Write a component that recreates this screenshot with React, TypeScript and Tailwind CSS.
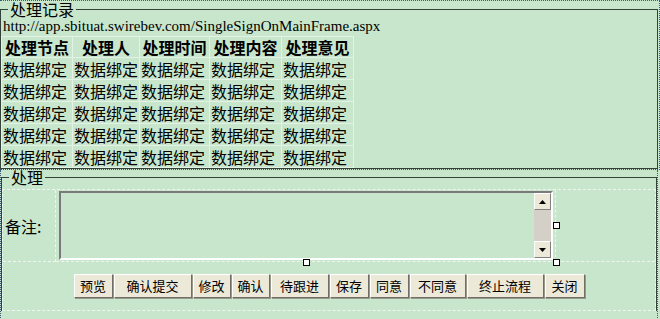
import React from 'react';

const HEADERS = ['处理节点', '处理人', '处理时间', '处理内容', '处理意见'];
const COL_WIDTHS = ['w-[71px]', 'w-[67px]', 'w-[70px]', 'w-[72px]', 'w-[72px]'];
const ROWS = 5;

const BUTTONS: { label: string; width: string }[] = [
  { label: '预览', width: 'w-[39px]' },
  { label: '确认提交', width: 'w-[78px]' },
  { label: '修改', width: 'w-[38px]' },
  { label: '确认', width: 'w-[38px]' },
  { label: '待跟进', width: 'w-[58px]' },
  { label: '保存', width: 'w-[39px]' },
  { label: '同意', width: 'w-[39px]' },
  { label: '不同意', width: 'w-[56px]' },
  { label: '终止流程', width: 'w-[77px]' },
  { label: '关闭', width: 'w-[40px]' },
];

const cjk = "font-['Noto_Sans_CJK_SC',sans-serif]";

function Handle({ className }: { className: string }) {
  return (
    <span
      className={`absolute h-[7px] w-[7px] border border-black bg-white ${className}`}
    />
  );
}

function ScrollButton({ up }: { up: boolean }) {
  return (
    <div className="flex h-[17px] w-[17px] items-center justify-center border border-t-white border-l-white border-r-[#808080] border-b-[#808080] bg-[#ece9d8]">
      <svg width="7" height="4" viewBox="0 0 7 4">
        {up ? (
          <polygon points="3.5,0 7,4 0,4" fill="#000" />
        ) : (
          <polygon points="0,0 7,0 3.5,4" fill="#000" />
        )}
      </svg>
    </div>
  );
}

export default function App() {
  return (
    <div className={`h-[319px] w-[660px] overflow-hidden bg-[#c8e6cc] text-black ${cjk}`}>
      {/* 处理记录 */}
      <div className="w-[660px] border-t border-r border-b border-dotted border-[#3b5a78]">
        <fieldset className="h-[168px] w-[658px] border border-[#34423b]">
          <legend className="ml-[7px] px-[2px] text-[16px] leading-[16px]">处理记录</legend>
          <div className="font-['Liberation_Serif',serif] text-[15px] leading-[19px] pl-[2px]">
            http://app.sbituat.swirebev.com/SingleSignOnMainFrame.aspx
          </div>
          <table className="w-[352px] table-fixed border-collapse border-r border-b border-r-[#9aa59c] border-b-[#9aa59c] text-[16px]">
            <colgroup>
              {COL_WIDTHS.map((w, i) => (
                <col key={i} className={w} />
              ))}
            </colgroup>
            <thead>
              <tr className="h-[21px]">
                {HEADERS.map((h) => (
                  <th
                    key={h}
                    className="whitespace-nowrap border border-[#e4f1e6] px-0 text-center font-bold leading-[19px]"
                  >
                    {h}
                  </th>
                ))}
              </tr>
            </thead>
            <tbody>
              {Array.from({ length: ROWS }).map((_, r) => (
                <tr key={r} className="h-[22px]">
                  {HEADERS.map((h) => (
                    <td
                      key={h}
                      className="whitespace-nowrap border border-[#e4f1e6] pl-[1px] leading-[20px]"
                    >
                      数据绑定
                    </td>
                  ))}
                </tr>
              ))}
            </tbody>
          </table>
        </fieldset>
      </div>

      {/* 处理 */}
      <div className="w-[658px] border-l border-r border-b border-dotted border-[#3b5a78] pb-[8px]">
        <fieldset className="w-[656px] border border-b-0 border-[#34423b]">
          <legend className="ml-[7px] px-[2px] text-[16px] leading-[15px]">处理</legend>
          <div className="mt-[4px] grid grid-cols-[53px_500px_1fr] border border-dashed border-[#eef6ef]">
            <div className="flex items-center border-r border-b border-dashed border-[#eef6ef] pl-[2px] text-[16px]">
              备注:
            </div>
            <div className="border-r border-b border-dashed border-[#eef6ef] pt-[1px] pb-[1px] pl-[3px]">
              <div className="relative h-[69px] w-[494px]">
                <div className="flex h-full w-full border-2 border-t-[#7a7a7a] border-l-[#7a7a7a] border-r-white border-b-white">
                  <textarea className="h-full flex-1 resize-none bg-transparent outline-none" />
                  <div className="flex w-[17px] flex-col bg-[#d4d0c8]">
                    <ScrollButton up />
                    <div className="flex-1" />
                    <ScrollButton up={false} />
                  </div>
                </div>
                <Handle className="left-[494px] top-[31px]" />
                <Handle className="left-[244px] top-[68px]" />
                <Handle className="left-[494px] top-[68px]" />
              </div>
            </div>
            <div className="border-b border-dashed border-[#eef6ef]" />
            <div className="col-span-3 flex h-[48px] items-center justify-center gap-px">
              {BUTTONS.map((b) => (
                <button
                  key={b.label}
                  className={`${b.width} h-[24px] border border-t-white border-l-white border-r-[#716f64] border-b-[#716f64] bg-[#ece9d8] text-[13px] leading-[20px] shadow-[1px_1px_0_#9a988c]`}
                >
                  {b.label}
                </button>
              ))}
            </div>
          </div>
        </fieldset>
      </div>
    </div>
  );
}
